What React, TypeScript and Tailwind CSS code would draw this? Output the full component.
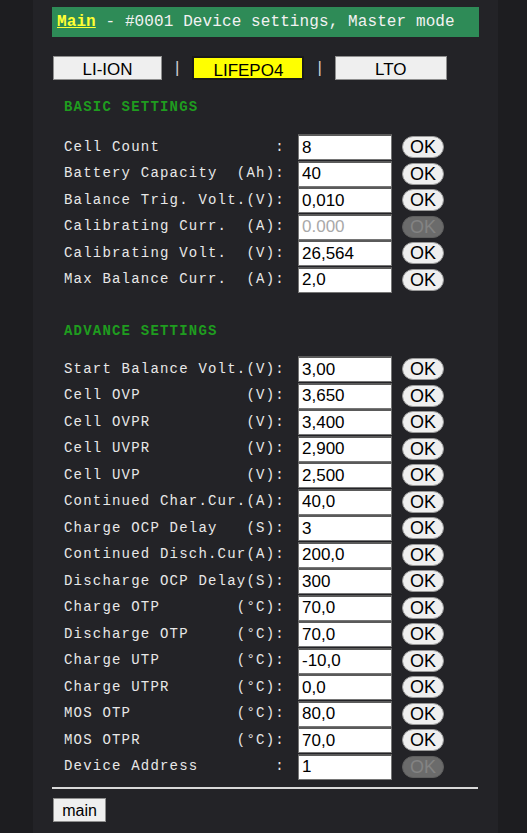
import React from 'react';

type Row = { label: string; value: string; disabled?: boolean; okDisabled?: boolean };

const basic: Row[] = [
  { label: 'Cell Count            :', value: '8' },
  { label: 'Battery Capacity  (Ah):', value: '40' },
  { label: 'Balance Trig. Volt.(V):', value: '0,010' },
  { label: 'Calibrating Curr.  (A):', value: '0.000', disabled: true, okDisabled: true },
  { label: 'Calibrating Volt.  (V):', value: '26,564' },
  { label: 'Max Balance Curr.  (A):', value: '2,0' },
];

const advance: Row[] = [
  { label: 'Start Balance Volt.(V):', value: '3,00' },
  { label: 'Cell OVP           (V):', value: '3,650' },
  { label: 'Cell OVPR          (V):', value: '3,400' },
  { label: 'Cell UVPR          (V):', value: '2,900' },
  { label: 'Cell UVP           (V):', value: '2,500' },
  { label: 'Continued Char.Cur.(A):', value: '40,0' },
  { label: 'Charge OCP Delay   (S):', value: '3' },
  { label: 'Continued Disch.Cur(A):', value: '200,0' },
  { label: 'Discharge OCP Delay(S):', value: '300' },
  { label: 'Charge OTP        (°C):', value: '70,0' },
  { label: 'Discharge OTP     (°C):', value: '70,0' },
  { label: 'Charge UTP        (°C):', value: '-10,0' },
  { label: 'Charge UTPR       (°C):', value: '0,0' },
  { label: 'MOS OTP           (°C):', value: '80,0' },
  { label: 'MOS OTPR          (°C):', value: '70,0' },
  { label: 'Device Address        :', value: '1', okDisabled: true },
];

const mono = { fontFamily: '"Liberation Mono", "Courier New", monospace' };
const sans = { fontFamily: '"Liberation Sans", Arial, sans-serif' };

function SettingRow({ row }: { row: Row }) {
  return (
    <div className="flex h-[26.5px] items-center">
      <span
        className="w-[234px] whitespace-pre text-[14px] tracking-[1.2px] text-[#e8e8e8]"
        style={mono}
      >
        {row.label}
      </span>
      <input
        readOnly
        value={row.value}
        className={`h-[26px] w-[94px] border border-t-2 border-[#767676] border-t-[#5a5a5a] bg-white px-[3px] text-[17px] outline-none ${
          row.disabled ? 'text-[#a9a9a9]' : 'text-black'
        }`}
        style={sans}
      />
      <button
        className={`ml-[10px] h-[22px] w-[42px] rounded-full border text-[18px] leading-none ${
          row.okDisabled
            ? 'border-[#5e5e5e] bg-[#6b6b6b] text-[#838383]'
            : 'border-[#9a9a9a] bg-[#efefef] text-black'
        }`}
        style={sans}
      >
        OK
      </button>
    </div>
  );
}

function SectionTitle({ children }: { children: React.ReactNode }) {
  return (
    <div
      className="text-[14px] font-bold tracking-[1.2px] text-[#1f9c1f]"
      style={mono}
    >
      {children}
    </div>
  );
}

export default function App() {
  return (
    <div className="min-h-[833px] w-full bg-[#1d1d20]">
      <div className="ml-[33px] min-h-[833px] w-[465px] bg-[#232327] px-[19px] pt-[7px]">
        <div
          className="flex h-[30px] items-center bg-[#2e8b57] px-[5px] text-[16px] tracking-[0.1px] text-[#f2f2f2]"
          style={mono}
        >
          <span className="font-bold text-[#ffff33] underline">Main</span>
          <span className="whitespace-pre"> - #0001 Device settings, Master mode</span>
        </div>

        <div className="mt-[19px] flex h-[24px] items-center pl-[1px] text-[17px]" style={sans}>
          <button className="h-[24px] w-[109px] border border-[#8f8f8f] bg-[#efefef] text-black">
            LI-ION
          </button>
          <span className="mx-[13px] text-[#cfcfcf]">|</span>
          <button className="h-[24px] w-[112px] border-2 border-[#1a1a1a] bg-[#ffff00] text-black">
            LIFEPO4
          </button>
          <span className="mx-[13px] text-[#cfcfcf]">|</span>
          <button className="h-[24px] w-[112px] border border-[#8f8f8f] bg-[#efefef] text-black">
            LTO
          </button>
        </div>

        <div className="pl-[12px]">
          <div className="mt-[17px]">
            <SectionTitle>BASIC SETTINGS</SectionTitle>
          </div>
          <div className="mt-[16px]">
            {basic.map((r) => (
              <SettingRow key={r.label} row={r} />
            ))}
          </div>

          <div className="mt-[28px]">
            <SectionTitle>ADVANCE SETTINGS</SectionTitle>
          </div>
          <div className="mt-[14px]">
            {advance.map((r) => (
              <SettingRow key={r.label} row={r} />
            ))}
          </div>
        </div>

        <div className="mt-[7px] h-[2px] w-[426px] bg-[#d9d9d9]" />
        <button
          className="ml-[1px] mt-[9px] h-[24px] w-[53px] border border-[#8f8f8f] bg-[#efefef] text-[16px] text-black"
          style={sans}
        >
          main
        </button>
      </div>
    </div>
  );
}
